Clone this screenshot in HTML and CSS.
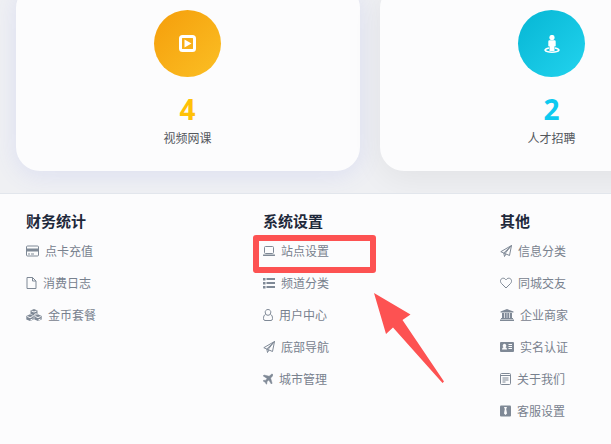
FILE: index.html
```html
<!DOCTYPE html>
<html lang="zh-CN">
<head>
    <meta charset="UTF-8">
    <meta name="viewport" content="width=device-width, initial-scale=1.0">
    <title>系统设置</title>
    <link rel="stylesheet" href="styles.css">
</head>
<body>
    <main class="stats">
        <div class="stat-card active">
            <div class="stat-icon orange">
                <svg width="17" height="17" viewBox="0 0 17 17"><rect x="1.5" y="1.5" width="14" height="14" rx="2" fill="none" stroke="#fff" stroke-width="3"/><path d="M5.500 4.500l7 4-7 4z" fill="#fff"/></svg>
            </div>
            <div class="stat-number yellow">4</div>
            <div class="stat-label">视频网课</div>
        </div>
        <div class="stat-card">
            <div class="stat-icon cyan">
                <svg width="16" height="18" viewBox="0 0 16 18" fill="#fff"><circle cx="8" cy="2.500" r="2.600"/><path d="M5.500 5.200h5q1.200 0 1.200 1.200v4.800h-1.200v4.800h-5v-4.800H4.300V6.400q0-1.200 1.200-1.200z"/><path d="M5 13C-1 14 0 17.200 8 17.200s9-3.200 3-4.200" fill="none" stroke="#fff" stroke-width="1.600"/></svg>
            </div>
            <div class="stat-number sky">2</div>
            <div class="stat-label">人才招聘</div>
        </div>
    </main>

    <footer class="footer">
        <nav class="menu">
            <h3>财务统计</h3>
            <ul>
                <li><a href="#"><svg width="13" height="12" viewBox="0 0 13 12"><rect x=".5" y="1" width="12" height="10" rx="1" class="line"/><path d="M0 3.500h13v3H0zM2 8.500h2v1H2zM5 8.500h3v1H5z"/></svg>点卡充值</a></li>
                <li><a href="#"><svg width="11" height="12" viewBox="0 0 11 12"><path d="M1 .5h5.500l3.500 3.500v7.500H1zM6.500.5V4H10" class="line"/></svg>消费日志</a></li>
                <li><a href="#"><svg width="16" height="12" viewBox="0 0 16 12"><path d="M8 0l3.500 1.500V5L8 6.500 4.500 5V1.500zM4 5.300L7.700 7v3.500L4 12 .3 10.500V7zM12 5.300L15.700 7v3.500L12 12l-3.700-1.500V7z"/><path d="M5.500 2L8 3l2.500-1M8.300 5.500l2.200-1M1.300 7.500L4 8.600l2.700-1.100M4.300 11l2.400-1M9.300 7.500L12 8.600l2.700-1.100M12.300 11l2.400-1" class="cut"/></svg>金币套餐</a></li>
            </ul>
        </nav>
        <nav class="menu">
            <h3>系统设置</h3>
            <ul>
                <li class="marked">
                    <a href="#"><svg width="12" height="12" viewBox="0 0 12 12"><rect x="1.500" y="1.500" width="9" height="7" rx="1" class="line"/><path d="M0 9.500h12v1q0 .5-1 .5H1q-1 0-1-.5z"/></svg>站点设置</a>
                    <span class="mark-box"></span>
                    <svg class="mark-arrow" width="72" height="92" viewBox="0 0 72 92"><path d="M1 1l36.500 21.500-8 5.500L71 89.500 69.500 91 20 35.500 13 42z"/></svg>
                </li>
                <li><a href="#"><svg width="12" height="12" viewBox="0 0 12 12"><path d="M0 1h2.500v2.500H0zM0 5h2.500v2.500H0zM0 9h2.500v2.500H0zM3.500 1H12v2H3.500zM3.500 5H12v2H3.500zM3.500 9H12v2H3.500z"/></svg>频道分类</a></li>
                <li><a href="#"><svg width="10" height="12" viewBox="0 0 10 12"><path d="M5 .5a2.700 2.700 0 0 1 2.700 3.500A2.700 2.700 0 0 1 5 6.300 2.700 2.700 0 0 1 2.300 4 2.700 2.700 0 0 1 5 .5zM2.500 5.500C1 6 .5 7.500.5 9.500q0 2 1.500 2h6q1.500 0 1.500-2C9.500 7.500 9 6 7.500 5.500" class="line"/></svg>用户中心</a></li>
                <li><a href="#"><svg width="12" height="12" viewBox="0 0 12 12"><path d="M11.500.5L.8 6.700l3 1.300 5.700 2.500zM11.500.5L3.800 8l.7 3.500L6 9M11.500.5L5 8.500" class="line"/></svg>底部导航</a></li>
                <li><a href="#"><svg width="10" height="12" viewBox="0 0 10 12"><path d="M9.700 1.300q.6.900-.6 2.200L7.600 5.100l1.500 5.100-.8.800-2.500-3.900-2 1.700.2 1.700-.7.700-1.100-2L.1 8l.7-.7 1.700.1L4.100 5.400.2 2.900l.8-.9 5.200 1.300L7.600 1.900q1.300-1.200 2.100-.6z" class="heavy"/></svg>城市管理</a></li>
            </ul>
        </nav>
        <nav class="menu">
            <h3>其他</h3>
            <ul>
                <li><a href="#"><svg width="12" height="12" viewBox="0 0 12 12"><path d="M11.500.5L.8 6.700l3 1.300 5.700 2.500zM11.500.5L3.800 8l.7 3.500L6 9M11.500.5L5 8.500" class="line"/></svg>信息分类</a></li>
                <li><a href="#"><svg width="12" height="12" viewBox="0 0 12 12"><path d="M6 11L1.500 6.500C-.8 4 1 1.200 3.200 1.200 4.800 1.200 5.500 2.300 6 3c.5-.7 1.200-1.800 2.800-1.800C11 1.200 12.800 4 10.500 6.500z" class="line"/></svg>同城交友</a></li>
                <li><a href="#"><svg width="14" height="12" viewBox="0 0 14 12"><path d="M7 0l6.500 2.500v1H.5v-1zM2 4h2v5H2zM4.700 4h2v5h-2zM7.300 4h2v5h-2zM10 4h2v5h-2zM1 9h12v1H1zM0 10.500h14V12H0z"/></svg>企业商家</a></li>
                <li><a href="#"><svg width="14" height="12" viewBox="0 0 14 12"><rect y="1" width="14" height="10" rx="1"/><path d="M8.500 3.500H12M8.500 5.500H12M8.500 7.500H12" class="cut"/><path d="M2 8.500q0-2 1.500-2.300a1.800 1.800 0 1 1 2 0Q7 6.500 7 8.500z" class="hole"/></svg>实名认证</a></li>
                <li><a href="#"><svg width="11" height="12" viewBox="0 0 11 12"><rect x=".5" y=".5" width="10" height="11" rx="1" class="line"/><path d="M1 2.500h9M2.500 5h6M2.500 7h6M2.500 9h3" class="line"/></svg>关于我们</a></li>
                <li><a href="#"><svg width="11" height="12" viewBox="0 0 11 12"><rect y=".5" width="11" height="11" rx="1"/><path d="M4 2h3L6.200 4 7 8.500 5.500 10 4 8.500 4.800 4z" class="hole"/></svg>客服设置</a></li>
            </ul>
        </nav>
    </footer>
</body>
</html>
```

FILE: styles.css
```css
* {
    margin: 0;
    padding: 0;
    box-sizing: border-box;
}

body {
    font-family: "Open Sans", "Noto Sans CJK SC", sans-serif;
    background: #fcfcfd;
    min-height: 100vh;
    display: flex;
    flex-direction: column;
    overflow: hidden;
}

.stats {
    display: flex;
    gap: 20px;
    margin-top: -16px;
    padding: 0 16px 22px;
    background: #eff0f3;
    overflow: hidden;
}

.stat-card {
    flex: 1 0 344px;
    display: flex;
    flex-direction: column;
    align-items: center;
    padding: 26px 21px 22px 20px;
    background: #fcfcfd;
    border-radius: 24px;
    box-shadow: 0 8px 32px rgba(0, 0, 0, 0.06);
}

.stat-card.active {
    box-shadow: 0 4px 24px rgba(90, 105, 241, 0.12);
}

.stat-icon {
    width: 67px;
    height: 67px;
    border-radius: 50%;
    display: flex;
    align-items: center;
    justify-content: center;
    margin-bottom: 16px;
}

.stat-icon.orange {
    background: linear-gradient(135deg, #f59e0b, #fbbf24);
}

.stat-icon.cyan {
    background: linear-gradient(135deg, #06b6d4, #22d3ee);
}

.stat-number {
    font-size: 28px;
    font-weight: 700;
    line-height: 32px;
    margin-bottom: 4px;
}

.stat-number.yellow {
    color: #ffc107;
}

.stat-number.sky {
    color: #0dcaf0;
}

.stat-label {
    font-size: 12px;
    line-height: 20px;
    color: #54585d;
}

.footer {
    flex: 1;
    display: grid;
    grid-template-columns: repeat(3, minmax(237px, 1fr));
    padding: 15px 26px;
    border-top: 1px solid #e2e6ec;
    background: #fcfcfd;
    overflow: hidden;
}

.menu h3 {
    font-size: 15px;
    font-weight: 700;
    line-height: 24px;
    color: #1e293b;
    margin-bottom: 2px;
}

.menu ul {
    list-style: none;
}

.menu li {
    position: relative;
}

.menu a {
    display: flex;
    align-items: center;
    gap: 6px;
    height: 32px;
    font-size: 12px;
    color: #78818e;
    text-decoration: none;
}

.menu a svg {
    fill: #7f8996;
}

.menu a .line {
    fill: none;
    stroke: #7f8996;
}

.menu a .heavy {
    stroke: #7f8996;
    stroke-width: 0.5;
}

.menu a .cut {
    fill: none;
    stroke: #fcfcfd;
}

.menu a .hole {
    fill: #fcfcfd;
}

/* highlight frame and pointer over the menu */
.mark-box {
    position: absolute;
    top: 0;
    left: -10px;
    width: 123px;
    height: 38px;
    border: 6px solid #fd5252;
    border-radius: 3px;
    pointer-events: none;
}

.mark-arrow {
    position: absolute;
    top: 57px;
    left: 110px;
    z-index: 1;
    fill: #fd5252;
    pointer-events: none;
}
```
